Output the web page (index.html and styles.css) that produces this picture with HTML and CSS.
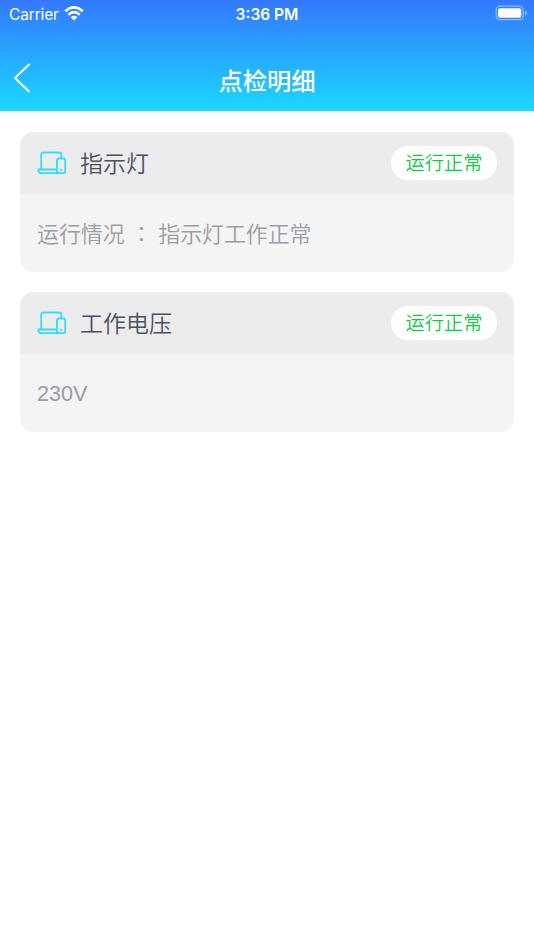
FILE: index.html
```html
<!DOCTYPE html>
<html lang="zh-CN">
<head>
<meta charset="utf-8">
<title>点检明细</title>
<link rel="stylesheet" href="styles.css">
</head>
<body>
<svg class="defs" width="0" height="0" aria-hidden="true">
  <symbol id="devices" viewBox="0 0 30 26">
    <path d="M4.200 19V4.700Q4.200 2.500 6.400 2.500H22.200Q24.400 2.500 24.400 4.700V8M19.500 19.500H1.300V20Q1.300 23.200 4.500 23.200H21.500"/>
    <rect x="19.900" y="8.500" width="8.300" height="14.700" rx="2"/>
    <circle cx="24" cy="20" r=".3"/>
  </symbol>
</svg>
<header class="header">
  <div class="status">
    <div class="carrier"><span>Carrier</span>
      <svg class="wifi" width="20" height="15" viewBox="0 0 20 15"><path d="M1.200 5.200Q10-2.500 18.800 5.200M4.300 8.700Q10 3.700 15.700 8.700" fill="none" stroke="#fff" stroke-width="2.700"/><path d="M6.700 11.200Q10 8.400 13.300 11.200L10 14.600Z" fill="#fff"/></svg>
    </div>
    <div class="time">3:36 PM</div>
    <svg class="battery" width="32" height="16" viewBox="0 0 32 16"><rect x="1.200" y="1.200" width="27" height="13.500" rx="4" fill="none" stroke="#fff" stroke-opacity=".45" stroke-width="1.300"/><rect x="3" y="3.200" width="23.200" height="9.500" rx="2" fill="#fff"/><path d="M30 5.500Q32 6.200 32 8T30 10.500Z" fill="#fff" fill-opacity=".5"/></svg>
  </div>
  <nav class="nav">
    <svg class="back" width="18" height="30" viewBox="0 0 18 30"><path d="M16 1.500L2 15L16 28.500"/></svg>
    <h1 class="title">点检明细</h1>
  </nav>
</header>
<main class="list">
  <section class="card">
    <div class="card-head">
      <svg class="device"><use href="#devices"/></svg>
      <h2 class="name">指示灯</h2>
      <span class="badge">运行正常</span>
    </div>
    <p class="card-body">运行情况 <span class="colon" lang="zh-TW">：</span> 指示灯工作正常</p>
  </section>
  <section class="card">
    <div class="card-head">
      <svg class="device"><use href="#devices"/></svg>
      <h2 class="name">工作电压</h2>
      <span class="badge">运行正常</span>
    </div>
    <p class="card-body latin">230V</p>
  </section>
</main>
</body>
</html>
```
FILE: styles.css
```css
* { box-sizing: border-box; }
body {
  margin: 0;
  min-height: 950px;
  background: #fff;
  font-family: "Noto Sans CJK SC", sans-serif;
}
h1, h2, p { margin: 0; font-weight: 400; }
.defs { display: none; }
.header {
  height: 111px;
  background: linear-gradient(#3478ff, #1bd8ff);
  color: #fff;
}
.status {
  display: grid;
  grid-template-columns: 1fr auto 1fr;
  align-items: center;
  height: 27px;
  padding: 0 7px 0 9px;
  font-family: Inter, sans-serif;
  font-size: 15.500px;
}
.carrier { display: flex; align-items: center; gap: 6px; letter-spacing: -.15px; }
.carrier span, .time { padding-top: 1px; }
.wifi { margin: -1px 0 0 -.500px; }
.time { margin-left: -2px; font-weight: 600; }
.battery { justify-self: end; margin-top: -1px; }
.nav {
  display: grid;
  grid-template-columns: 60px 1fr 60px;
  align-items: center;
  height: 84px;
  padding-top: 22px;
}
.back { margin: -4px 0 0 13px; fill: none; stroke: #fff; stroke-width: 2; stroke-linecap: round; stroke-linejoin: round; }
.title { text-align: center; font-size: 24.300px; font-weight: 500; line-height: 36px; }
.list { display: grid; gap: 20.500px; padding: 20.500px 20px 0; }
.card { height: 140px; border-radius: 13px; overflow: hidden; background: #f4f4f4; }
.card-head {
  display: flex;
  align-items: center;
  height: 62.300px;
  padding: 0 17px;
  background: #ececec;
}
.device { width: 30px; height: 26px; fill: none; stroke: #32dcfd; stroke-width: 1.800; stroke-linejoin: round; }
.name { margin: -2px 0 0 13px; color: #4b5362; font-size: 23px; font-weight: 350; line-height: 34px; }
.badge {
  width: 106px;
  height: 34px;
  margin-left: auto;
  border-radius: 17px;
  background: #fff;
  color: #0bcd43;
  font-size: 19.300px;
  font-weight: 350;
  line-height: 33px;
  text-align: center;
}
.card-body { padding: 0 17px; color: #9a9da3; font-size: 21.900px; font-weight: 350; line-height: 77px; white-space: pre; }
.latin { font-family: "Liberation Sans", sans-serif; font-size: 21.600px; line-height: 79px; }
.colon { margin: 0 1px; font-family: "Noto Sans CJK TC", sans-serif; }
```
